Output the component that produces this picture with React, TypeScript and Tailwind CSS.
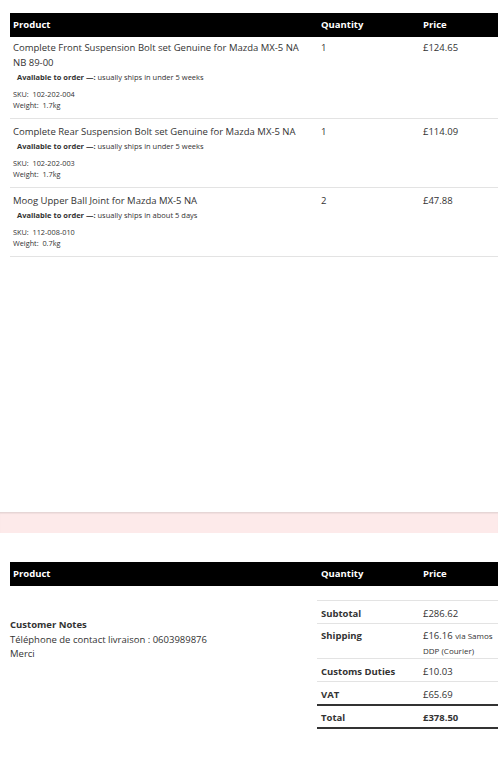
import React from "react";

const items = [
  {
    title: "Complete Front Suspension Bolt set Genuine for Mazda MX-5 NA NB 89-00",
    ship: "usually ships in under 5 weeks",
    sku: "102-202-004",
    weight: "1.7kg",
    qty: "1",
    price: "£124.65",
  },
  {
    title: "Complete Rear Suspension Bolt set Genuine for Mazda MX-5 NA",
    ship: "usually ships in under 5 weeks",
    sku: "102-202-003",
    weight: "1.7kg",
    qty: "1",
    price: "£114.09",
  },
  {
    title: "Moog Upper Ball Joint for Mazda MX-5 NA",
    ship: "usually ships in about 5 days",
    sku: "112-008-010",
    weight: "0.7kg",
    qty: "2",
    price: "£47.88",
  },
];

function Header() {
  return (
    <div className="grid grid-cols-[308px_102px_1fr] bg-black text-white font-bold text-[9.5px] h-[24px] items-center">
      <div className="pl-[3px]">Product</div>
      <div className="pl-[3px]">Quantity</div>
      <div className="pl-[3px]">Price</div>
    </div>
  );
}

export default function App() {
  return (
    <div
      className="w-[498px] min-h-[768px] bg-white text-[#333] overflow-hidden"
      style={{ fontFamily: '"Open Sans", "Noto Sans", sans-serif' }}
    >
      <div className="pl-[10px] pt-[13px]">
        <Header />
        {items.map((it, i) => (
          <div
            key={i}
            className={
              "grid grid-cols-[308px_102px_1fr] border-b border-[#e3e3e3] pb-[7px] " +
              (i === 0 ? "pt-[3px]" : "pt-[5px]")
            }
          >
            <div className="pl-[3px]">
              <div className="text-[9.5px] leading-[15px] pr-[4px]">{it.title}</div>
              <div className="text-[7.5px] leading-[11px] mt-[2px] pl-[4px]">
                <span className="font-bold">Available to order —:</span> {it.ship}
              </div>
              <div className="text-[7.3px] leading-[11px] mt-[6px]">
                <div>SKU:&nbsp; {it.sku}</div>
                <div>Weight:&nbsp; {it.weight}</div>
              </div>
            </div>
            <div className="pl-[3px] text-[9.5px] leading-[15px]">{it.qty}</div>
            <div className="pl-[3px] text-[9.5px] leading-[15px]">{it.price}</div>
          </div>
        ))}
      </div>

      <div className="h-[255px]" />

      <div className="h-[21px] bg-[#fdeaea] border-t border-[#e6d6d6] shadow-[inset_0_1px_1px_rgba(0,0,0,0.05)]" />

      <div className="pl-[10px] pt-[29px]">
        <Header />
        <div className="flex">
          <div className="w-[307px] pt-[32px]">
            <div className="text-[9.5px] leading-[14.5px] font-bold">Customer Notes</div>
            <div className="text-[9.5px] leading-[14.5px]">
              Téléphone de contact livraison : 0603989876
            </div>
            <div className="text-[9.5px] leading-[14.5px]">Merci</div>
          </div>
          <div className="flex-1 pt-[14px] text-[9.5px]">
            <div className="border-t border-[#e3e3e3]">
              <div className="grid grid-cols-[103px_1fr] border-b border-[#e3e3e3] pt-[5px] pb-[2px] leading-[15px]">
                <div className="pl-[4px] font-bold">Subtotal</div>
                <div className="pl-[3px]">£286.62</div>
              </div>
              <div className="grid grid-cols-[103px_1fr] border-b border-[#e3e3e3] pt-[4px] pb-0 leading-[15px]">
                <div className="pl-[4px] font-bold">Shipping</div>
                <div className="pl-[3px] pr-[2px]">
                  £16.16 <span className="text-[8px] leading-[15px]">via Samos DDP (Courier)</span>
                </div>
              </div>
              <div className="grid grid-cols-[103px_1fr] border-b border-[#e3e3e3] pt-[5px] pb-[2px] leading-[15px]">
                <div className="pl-[4px] font-bold">Customs Duties</div>
                <div className="pl-[3px]">£10.03</div>
              </div>
              <div className="grid grid-cols-[103px_1fr] border-b-2 border-[#333] pt-[5px] pb-[2px] leading-[15px]">
                <div className="pl-[4px] font-bold">VAT</div>
                <div className="pl-[3px]">£65.69</div>
              </div>
              <div className="grid grid-cols-[103px_1fr] border-b-2 border-[#333] pt-[4px] pb-[2px] leading-[15px]">
                <div className="pl-[4px] font-bold">Total</div>
                <div className="pl-[3px] font-bold">£378.50</div>
              </div>
            </div>
          </div>
        </div>
      </div>
    </div>
  );
}
